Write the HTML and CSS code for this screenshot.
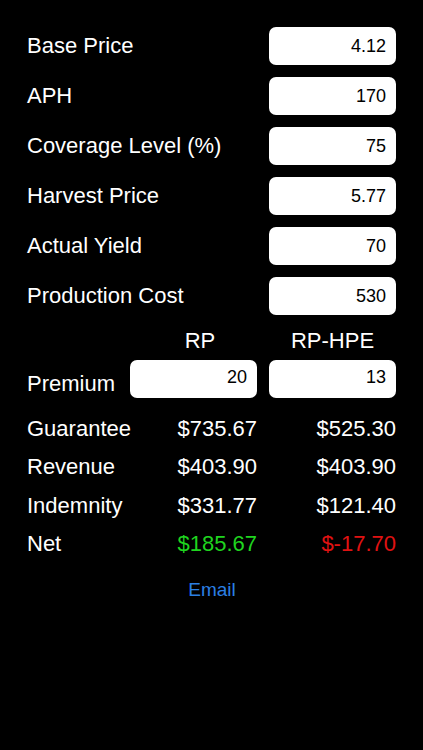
FILE: index.html
```html
<html>
  <head>
    <title>Crop Insurance Calculator</title>
    <link rel="stylesheet" href="styles.css">
  </head>

  <body>
    <div id="calculator">
      <div class="inputRow">
        <span class="label">Base Price</span>
        <div class="field">4.12</div>
      </div>
      <div class="inputRow">
        <span class="label">APH</span>
        <div class="field">170</div>
      </div>
      <div class="inputRow">
        <span class="label">Coverage Level (%)</span>
        <div class="field">75</div>
      </div>
      <div class="inputRow">
        <span class="label">Harvest Price</span>
        <div class="field">5.77</div>
      </div>
      <div class="inputRow">
        <span class="label">Actual Yield</span>
        <div class="field">70</div>
      </div>
      <div class="inputRow">
        <span class="label">Production Cost</span>
        <div class="field">530</div>
      </div>

      <div class="grid headerRow">
        <span></span>
        <span class="heading rpHeading">RP</span>
        <span class="heading">RP-HPE</span>
      </div>

      <div class="grid premiumRow">
        <span class="label premiumLabel">Premium</span>
        <div class="field premiumField">20</div>
        <div class="field premiumField">13</div>
      </div>

      <div id="results">
        <div class="grid resultRow">
          <span class="label">Guarantee</span>
          <span class="amount">$735.67</span>
          <span class="amount">$525.30</span>
        </div>
        <div class="grid resultRow">
          <span class="label">Revenue</span>
          <span class="amount">$403.90</span>
          <span class="amount">$403.90</span>
        </div>
        <div class="grid resultRow">
          <span class="label">Indemnity</span>
          <span class="amount">$331.77</span>
          <span class="amount">$121.40</span>
        </div>
        <div class="grid resultRow">
          <span class="label">Net</span>
          <span class="amount positive">$185.67</span>
          <span class="amount negative">$-17.70</span>
        </div>
      </div>

      <div id="email">Email</div>
    </div>
  </body>
</html>
```

FILE: styles.css
```css
*, *:before, *:after {
  box-sizing: border-box;
  padding: 0;
  margin: 0;
}

body {
  background-color: #000;
  color: #fff;
  font-family: "Liberation Sans", Arial, sans-serif;
  width: 423px;
  height: 750px;
}

#calculator {
  padding: 27px 27px 0 27px;
}

.label {
  font-size: 22px;
  line-height: 38px;
  white-space: nowrap;
}

.inputRow {
  display: flex;
  justify-content: space-between;
  align-items: center;
  height: 38px;
  margin-bottom: 12px;
}

.field {
  width: 127px;
  height: 38px;
  background-color: #fff;
  color: #000;
  border-radius: 7px;
  text-align: right;
  padding-right: 10px;
  font-size: 18px;
  line-height: 38px;
}

.premiumField {
  line-height: 34px;
}

/* label column is narrower than its text, labels just overflow */
.grid {
  display: grid;
  grid-template-columns: 91px 127px 127px;
  column-gap: 12px;
}

.headerRow {
  height: 28px;
  align-items: center;
}

.heading {
  text-align: center;
  font-size: 22px;
}

.rpHeading {
  padding-left: 13px;
}

.premiumRow {
  height: 38px;
  align-items: center;
}

.premiumLabel {
  padding-top: 10px;
}

#results {
  padding-top: 17px;
}

.resultRow {
  height: 38.3px;
  align-items: center;
}

.amount {
  text-align: right;
  font-size: 22px;
  line-height: 38px;
}

.positive {
  color: #1fd41f;
}

.negative {
  color: #e01212;
}

#email {
  text-align: center;
  color: #2b7fe3;
  font-size: 19px;
  margin-top: 16px;
  padding-left: 1px;
}
```
